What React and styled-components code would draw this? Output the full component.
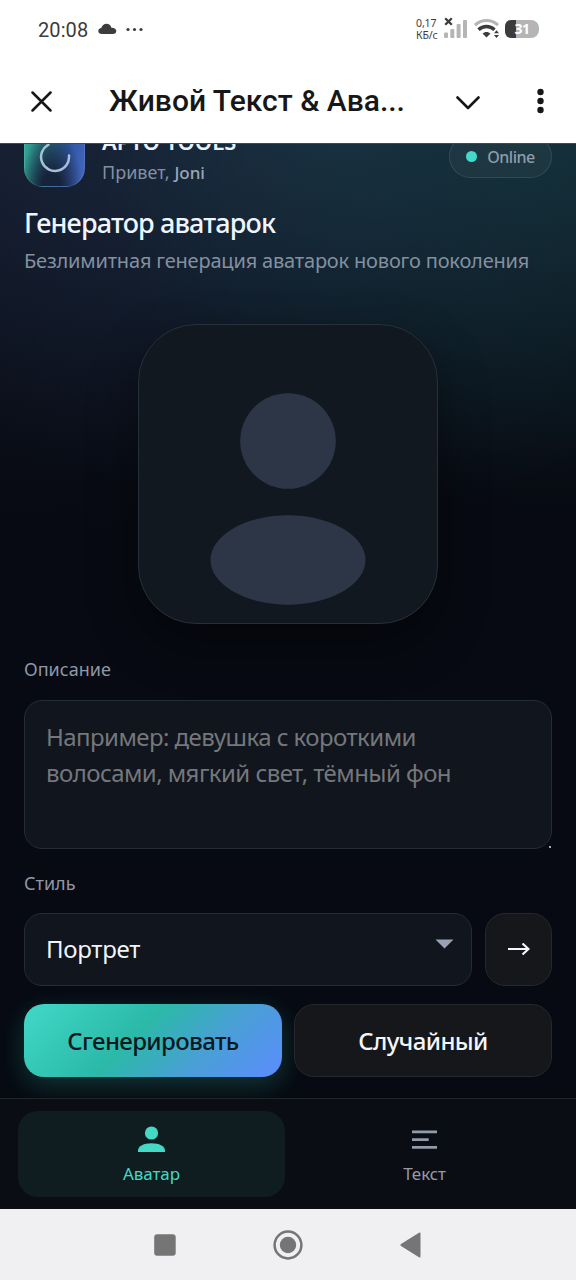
import React from 'react';
import styled, { createGlobalStyle } from 'styled-components';

const Global = createGlobalStyle`
  * { box-sizing: border-box; }
  body { margin: 0; background: #070a12; }
  button { font: inherit; }
`;

const Phone = styled.div`
  width: 576px;
  height: 1280px;
  display: flex;
  flex-direction: column;
  overflow: hidden;
  background: #fff;
  font-family: 'Noto Sans', 'Open Sans', sans-serif;
`;

const StatusBar = styled.div`
  height: 59px;
  padding: 0 37px 2px 38px;
  display: flex;
  align-items: center;
  justify-content: space-between;
  color: #3c3c3c;
`;

const StatusGroup = styled.div`
  display: flex;
  align-items: center;
`;

const Clock = styled.span`
  width: 60px;
  padding-top: 2px;
  font: 400 20px/24px Roboto, sans-serif;
  letter-spacing: 0.1px;
`;

const DataRate = styled.div`
  width: 27px;
  display: flex;
  flex-direction: column;
  align-items: flex-start;
  font-size: 10.5px;
  line-height: 12px;
  letter-spacing: -0.1px;
  white-space: nowrap;
`;

const Battery = styled.div`
  width: 34px;
  height: 18px;
  border-radius: 6px 8px 8px 6px;
  background: linear-gradient(90deg, #3c3c3c 0 11px, #b5b5b5 11px);
  color: #fff;
  font-size: 14px;
  font-weight: 700;
  line-height: 18px;
  letter-spacing: -0.5px;
  text-align: center;
`;

const AppBar = styled.header`
  height: 84px;
  padding: 0 32px 0 31px;
  display: flex;
  align-items: center;
  color: #171717;
`;

const AppTitle = styled.h1`
  margin: 0 50px 0 57px;
  flex: none;
  width: 297px;
  font: 500 30px/36px Roboto, sans-serif;
  white-space: nowrap;
`;

const Chevron = styled.svg`
  margin-top: 3px;
`;

const Spacer = styled.div`
  flex: 1;
`;

const Page = styled.main`
  height: 955px;
  padding: 0 24px;
  display: flex;
  flex-direction: column;
  overflow: hidden;
  border-top: 1px solid #3c4a50;
  background:
    radial-gradient(480px 370px at 100% 0, rgba(35, 120, 115, 0.22), rgba(35, 120, 115, 0) 100%),
    radial-gradient(640px 380px at 55% -20px, rgba(55, 105, 145, 0.3), rgba(55, 105, 145, 0) 100%),
    radial-gradient(460px 400px at 0 0, rgba(65, 65, 115, 0.16), rgba(65, 65, 115, 0) 100%),
    #070a12;
`;

const Brand = styled.div`
  flex: none;
  height: 61px;
  margin-top: -18px;
  display: flex;
  align-items: center;
`;

const Logo = styled.div`
  width: 61px;
  height: 61px;
  display: grid;
  place-items: center;
  border: 1px solid rgba(255, 255, 255, 0.1);
  border-radius: 19px;
  background:
    radial-gradient(ellipse at 45% 112%, #17233a 0 22%, rgba(23, 35, 58, 0) 68%),
    linear-gradient(100deg, #35b39c 0%, #246e77 36%, #2f559f 68%, #4668c4 100%) border-box;
`;

const BrandText = styled.div`
  flex: 1;
  padding-left: 17px;
`;

const BrandName = styled.div`
  margin-top: -2px;
  font-size: 22px;
  font-weight: 600;
  line-height: 30px;
  color: #eaf2ff;
`;

const Greeting = styled.div`
  margin-top: 3px;
  font-size: 18px;
  line-height: 26px;
  color: #8490a1;

  b {
    font-weight: 500;
    font-size: 17px;
    color: #9ba6b8;
  }
`;

const OnlinePill = styled.div`
  width: 103px;
  height: 43px;
  display: flex;
  align-items: center;
  justify-content: center;
  gap: 10px;
  border: 1px solid rgba(255, 255, 255, 0.1);
  border-radius: 22px;
  background: rgba(255, 255, 255, 0.04);
  color: #909cac;
  font-size: 16px;
  font-weight: 500;
  letter-spacing: -0.5px;

  &::before {
    content: '';
    width: 11px;
    height: 11px;
    border-radius: 50%;
    background: #45d8c8;
  }
`;

const Heading = styled.h2`
  flex: none;
  margin: 19px 0 8px;
  font-size: 27px;
  font-weight: 500;
  line-height: 34px;
  letter-spacing: -0.85px;
  color: #eef5ff;
`;

const Lead = styled.p`
  flex: none;
  margin: 0 0 50px;
  font-size: 20px;
  line-height: 26px;
  letter-spacing: -0.18px;
  white-space: nowrap;
  color: #8490a1;
`;

const AvatarCard = styled.div`
  flex: none;
  align-self: center;
  width: 300px;
  height: 300px;
  border: 1px solid #27303a;
  border-radius: 58px;
  background: #111820;
  box-shadow: 0 20px 50px rgba(0, 0, 0, 0.4);
`;

const Label = styled.div`
  flex: none;
  margin: ${(p) => p.$top}px 0 ${(p) => p.$bottom}px;
  font-size: 18px;
  line-height: 24px;
  color: #8f98a7;
`;

const Prompt = styled.div`
  flex: none;
  position: relative;
  height: 149px;
  padding: 18px 21px;
  border: 1px solid #262c33;
  border-radius: 18px;
  background: #11151d;
  font-size: 24px;
  line-height: 36px;
  letter-spacing: -0.56px;
  color: #74777b;

  &::after {
    content: '';
    position: absolute;
    right: 0;
    bottom: 0;
    width: 2px;
    height: 2px;
    background: #a5a8ac;
  }
`;

const Row = styled.div`
  flex: none;
  display: grid;
  grid-template-columns: ${(p) => p.$columns};
  gap: ${(p) => p.$gap}px;
  height: 73px;
`;

const ActionRow = styled(Row)`
  margin-top: 18px;
`;

const Select = styled.div`
  display: flex;
  align-items: center;
  justify-content: space-between;
  padding: 0 17px 3px 21px;
  border: 1px solid #262c33;
  border-radius: 18px;
  background: #11151d;
  font-size: 24px;
  letter-spacing: -0.3px;
  color: #f1f4fa;

  svg {
    margin-top: -8px;
  }
`;

const Button = styled.button`
  display: grid;
  place-items: center;
  padding: 0;
  border: 1px solid #25282c;
  border-radius: 20px;
  background: #15171b;
  color: #f3f6fb;
  font-size: 24px;
  font-weight: 500;
  letter-spacing: -0.6px;
`;

const PrimaryButton = styled(Button)`
  border: 0;
  background: linear-gradient(135deg, #41d8c7 0%, #2bb9a8 43%, #4a9fd6 70%, #5b8cff 100%);
  box-shadow: 0 8px 26px rgba(45, 200, 175, 0.24);
  color: #06191f;
`;

const Tabs = styled.nav`
  height: 111px;
  padding: 12px 18px;
  display: grid;
  grid-template-columns: 1fr 1fr;
  gap: 6px;
  border-top: 1px solid #20252c;
  background: #0a0d14;
`;

const Tab = styled.div`
  height: 86px;
  padding-top: 15px;
  display: flex;
  flex-direction: column;
  align-items: center;
  gap: 8px;
  border-radius: 20px;
  background: ${(p) => (p.$active ? '#0f1d21' : 'transparent')};
  color: ${(p) => (p.$active ? '#45d8c4' : '#939ba9')};
  font-size: 17px;
  line-height: 25px;
  letter-spacing: -0.1px;
`;

const SystemNav = styled.footer`
  height: 71px;
  display: flex;
  align-items: center;
  justify-content: center;
  gap: 97px;
  padding-right: 1px;
  background: #f0f0f2;
`;

export default function App() {
  return (
    <Phone>
      <Global />
      <StatusBar>
        <StatusGroup>
          <Clock>20:08</Clock>
          <svg width="46" height="12" viewBox="0 0 46 12" fill="#3c3c3c">
            <path d="M4.2 11C1.7 11 .3 9.8.3 8c0-1.6 1.2-2.7 3-2.9C4 2.4 6 .8 8.5.8c2.4 0 4.3 1.5 4.9 3.9 2.8-.2 4.9 1.1 4.9 3.4 0 1.8-1.4 2.9-3.6 2.9z" />
            <circle cx="30" cy="6.5" r="1.6" />
            <circle cx="36.5" cy="6.5" r="1.6" />
            <circle cx="43" cy="6.5" r="1.6" />
          </svg>
        </StatusGroup>
        <StatusGroup>
          <DataRate>
            <span>0,17</span>
            <span>КБ/с</span>
          </DataRate>
          <svg width="62" height="24" viewBox="0 0 62 24">
            <g fill="#b5b5b5">
              <rect x="1" y="15.5" width="4" height="5.5" rx="1" />
              <rect x="7.3" y="12" width="4" height="9" rx="1" />
              <rect x="13.6" y="7" width="4" height="14" rx="1" />
              <rect x="20" y="3" width="4" height="18" rx="1" />
            </g>
            <path d="m2.2 1.2 6.6 6.6m0-6.6L2.2 7.8" stroke="#3c3c3c" strokeWidth="2.3" />
            <path d="M32 8.2C38.5 2 48.5 2 55 8.2" fill="none" stroke="#b5b5b5" strokeWidth="3" />
            <path d="M35.500 12.7c4.5-4.3 11.5-4.3 16 0" fill="none" stroke="#3c3c3c" strokeWidth="3.4" />
            <path d="M39.500 16.6c2.3-2.2 5.7-2.2 8 0l-4 4z" fill="#3c3c3c" />
            <path d="m51 16.2 2.5-3 2.5 3zM51 18l2.5 3 2.5-3z" fill="#3c3c3c" />
          </svg>
          <Battery>31</Battery>
        </StatusGroup>
      </StatusBar>

      <AppBar>
        <svg width="21" height="21" viewBox="0 0 21 21" fill="none" stroke="#171717" strokeWidth="2.5" strokeLinecap="round">
          <path d="m1.5 1.5 18 18m0-18-18 18" />
        </svg>
        <AppTitle>Живой Текст &amp; Ава...</AppTitle>
        <Chevron width="24" height="14" viewBox="0 0 24 14" fill="none" stroke="#171717" strokeWidth="2.6" strokeLinecap="round" strokeLinejoin="round">
          <path d="M1.500 1.500 12 12 22.500 1.500" />
        </Chevron>
        <Spacer />
        <svg width="7" height="26" viewBox="0 0 7 26" fill="#171717">
          <circle cx="3.5" cy="4" r="3.2" />
          <circle cx="3.5" cy="13" r="3.2" />
          <circle cx="3.5" cy="22" r="3.2" />
        </svg>
      </AppBar>

      <Page>
        <Brand>
          <Logo>
            <svg width="34" height="34" viewBox="0 0 34 34" fill="none" stroke="#a9bfd8" strokeWidth="2.5" strokeLinecap="round">
              <path d="M31 15.500A14 14 0 1 1 10.500 4.600" />
            </svg>
          </Logo>
          <BrandText>
            <BrandName>APTO TOOLS</BrandName>
            <Greeting>Привет, <b>Joni</b></Greeting>
          </BrandText>
          <OnlinePill>Online</OnlinePill>
        </Brand>

        <Heading>Генератор аватарок</Heading>
        <Lead>Безлимитная генерация аватарок нового поколения</Lead>

        <AvatarCard>
          <svg width="298" height="298" viewBox="0 0 298 298" fill="#2c3646">
            <circle cx="149" cy="116" r="47.8" />
            <ellipse cx="149" cy="235" rx="77.5" ry="44.7" />
          </svg>
        </AvatarCard>

        <Label $top={33} $bottom={19}>Описание</Label>
        <Prompt>
          Например: девушка с короткими
          <br />
          волосами, мягкий свет, тёмный фон
        </Prompt>

        <Label $top={22} $bottom={18}>Стиль</Label>
        <Row $columns="448px 67px" $gap={13}>
          <Select>
            Портрет
            <svg width="19" height="10" viewBox="0 0 19 10" fill="#99a3b3">
              <path d="M.5.5h18l-9 9z" />
            </svg>
          </Select>
          <Button>
            <svg width="22" height="14" viewBox="0 0 22 14" fill="none" stroke="#f3f6fb" strokeWidth="2.2">
              <path d="M0 6h20.500M14.500.500 20.500 6l-6 5.500" />
            </svg>
          </Button>
        </Row>
        <ActionRow $columns="1fr 1fr" $gap={12}>
          <PrimaryButton>Сгенерировать</PrimaryButton>
          <Button>Случайный</Button>
        </ActionRow>
      </Page>

      <Tabs>
        <Tab $active>
          <svg width="27" height="27" viewBox="0 0 27 27" fill="currentColor">
            <circle cx="13.5" cy="7" r="6.6" />
            <path d="M0 26v-1.500C0 20 6 17.200 13.500 17.200S27 20 27 24.500V26z" />
          </svg>
          Аватар
        </Tab>
        <Tab>
          <svg width="25" height="27" viewBox="0 0 25 27" fill="currentColor">
            <path d="M0 4.500h25v2.700H0zM0 12.300h16.700V15H0zM0 20h25v2.700H0z" />
          </svg>
          Текст
        </Tab>
      </Tabs>

      <SystemNav>
        <svg width="22" height="22" viewBox="0 0 22 22" fill="#757575">
          <rect x=".2" y=".3" width="21.5" height="21.4" rx="3" />
        </svg>
        <svg width="30" height="30" viewBox="0 0 30 30">
          <circle cx="15" cy="15" r="13.4" fill="none" stroke="#757575" strokeWidth="2.5" />
          <circle cx="15" cy="15" r="8.2" fill="#757575" />
        </svg>
        <svg width="21" height="26" viewBox="0 0 21 26" fill="#757575">
          <path d="M1 12 19 .8q1.500-.8 1.500 1v22.400q0 1.800-1.500 1L1 14q-1.200-1 0-2z" />
        </svg>
      </SystemNav>
    </Phone>
  );
}
